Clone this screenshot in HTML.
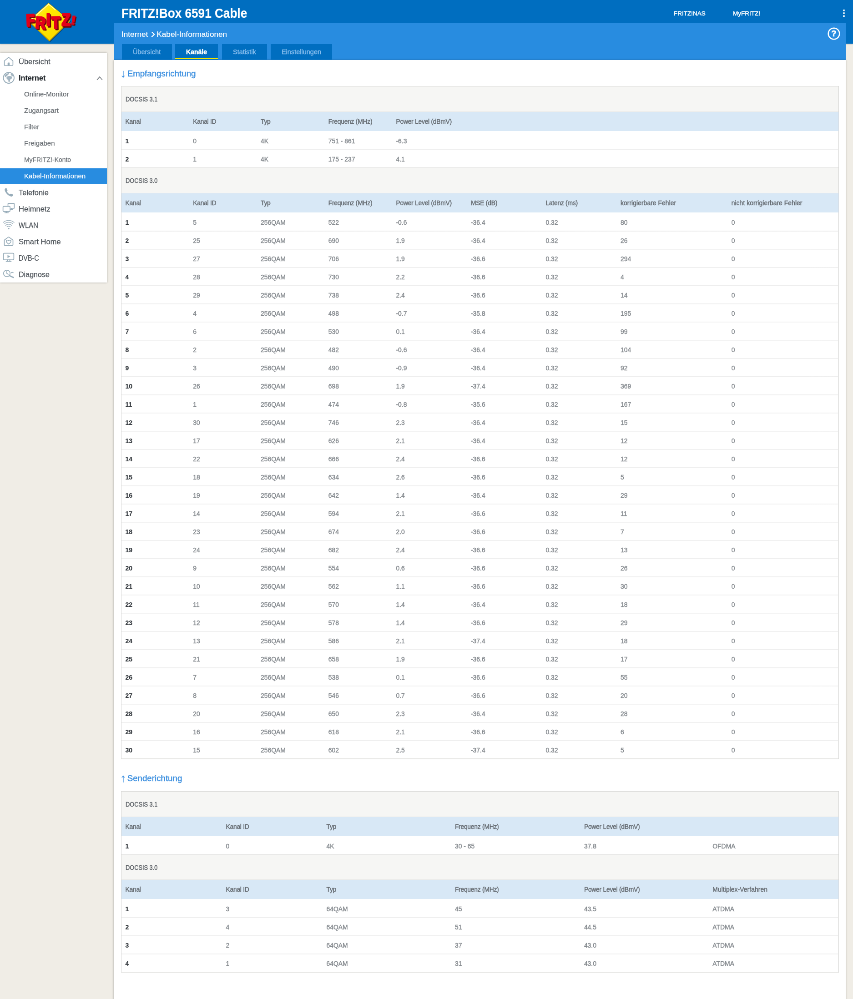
<!DOCTYPE html>
<html lang="de">
<head>
<meta charset="utf-8">
<title>FRITZ!Box 6591 Cable</title>
<style>
html,body{margin:0;padding:0}
html{width:853px;height:999px;overflow:hidden}
body{width:853px;height:999px;overflow:hidden;background:#f0ede6;font-family:"Liberation Sans",sans-serif;color:#3f464c}
#pg{will-change:transform;position:absolute;left:0;top:0;width:1875px;height:2196px;transform:scale(0.454933);transform-origin:0 0;background:#f0ede6;overflow:hidden}
#pg div,#pg span{box-sizing:border-box}
#pg{-webkit-text-stroke:0.45px currentColor}
.abs{position:absolute}
#top{left:0;top:0;width:1875px;height:96px;background:#006ec0;box-shadow:0 1px 3px rgba(0,0,0,.25)}
#sub{left:250px;top:50px;width:1609px;height:82px;background:#288ce0}
#main{left:250px;top:132px;width:1609px;height:2080px;background:#fff;box-shadow:0 0 4px rgba(0,0,0,.3)}
#title{left:267px;top:10.5px;font-size:29px;transform:scaleX(.902);-webkit-text-stroke:0.2px #fff;transform-origin:0 0;font-weight:bold;color:#fff;white-space:nowrap;line-height:36px}
.tl{top:20px;font-size:13.5px;color:#fff;white-space:nowrap;line-height:20px}
#crumb{left:267px;top:64px;font-size:17.2px;-webkit-text-stroke:0.15px #fff;color:#fff;white-space:nowrap;line-height:22px}
.gt{display:inline-block;font-size:27px;line-height:0;vertical-align:baseline;-webkit-text-stroke:0;transform:translateY(1.5px) scaleX(1.15);margin:0 -1px 0 1.5px}
.tab{top:97px;height:34px;background:#006ec0;color:#86bdee;font-size:14.5px;line-height:34px;text-align:center;white-space:nowrap}
.tab.on{color:#fff;font-weight:bold;font-size:14px}
.tab.on:after{content:"";position:absolute;left:0;right:0;bottom:1.5px;height:3px;background:#f2e500}
#nav{-webkit-text-stroke:0.25px currentColor;left:0;top:116px;width:235px;height:505px;background:#fff;box-shadow:0 0 4px rgba(0,0,0,.3);padding-top:2px}
.mi{position:relative;height:36px;line-height:34.5px;font-size:16.5px;color:#4b5157;padding-left:41px;white-space:nowrap}
.sx{display:inline-block;transform-origin:0 50%}
.mi.sub{font-size:15px;padding-left:53px;color:#676c71}
.mi.sel{background:#288ce0;color:#fff;box-shadow:inset 0 -1.5px 0 #fff}
.mi.open{color:#23282d;font-weight:bold;font-size:16.2px}
.mi svg{position:absolute;left:6.5px;top:5px;width:24px;height:24px;overflow:visible}
.mi svg.chev{left:210px;top:9px;width:18px;height:18px}
.hd{position:absolute;left:266px;padding-left:14px;font-size:19.2px;line-height:26px;color:#3c8fdf;white-space:nowrap;transform:scaleX(.975);transform-origin:0 0}
.ar{position:absolute;left:-1.6px;top:-1px;font-size:25px;line-height:26px}
.box{position:absolute;left:266px;width:1578px;border:1px solid #d6d6d4;border-bottom:2px solid #e4e4e2;background:#fff}
.cap span{display:inline-block;transform:scaleX(.875);transform-origin:0 50%}
.cap{height:57px;line-height:57px;padding-left:8.5px;font-size:14.6px;color:#5d6267;background:#f6f6f4;border-top:1px solid #e4e4e2;border-bottom:1px solid #e9e9e7}
.cap.first{height:56px;line-height:57px;border-top:0}
.tx .cap{height:56px}
.r{display:flex;width:1676.60px;transform:scaleX(0.94);transform-origin:0 0;height:40px;line-height:44px;font-size:14.8px;color:#84898e;white-space:nowrap}
.r span{display:block;padding-left:9.04px;flex:none}
.r.h{height:42px;line-height:42px;background:#d8e8f6;color:#656b71;border-bottom:0}
.r.h span{letter-spacing:-0.3px}
.rx .r.h .c8,.rx .r.h .c9,.tx .r.h .c6{letter-spacing:.05px}
.r.d .c1{font-weight:bold;color:#33383d;-webkit-text-stroke:0.2px currentColor}
.r.d + .r.d{background:linear-gradient(#eeeeee,#eeeeee) 0 0/100% 1.7px no-repeat}
.rx span{width:158.24px}
.rx .c5,.rx .c6,.rx .c7{width:175.00px}
.rx .c8,.rx .c9{width:259.31px}
.tx span{width:300.43px}
.tx .c4{width:302.13px}
.tx .c1,.tx .c2{width:235.11px}
</style>
</head>
<body>
<div id="pg">
<div id="top" class="abs"></div>
<div id="sub" class="abs"></div>
<div id="main" class="abs"></div>
<div id="title" class="abs">FRITZ!Box 6591 Cable</div>
<div class="abs tl" style="left:1481px">FRITZ!NAS</div>
<div class="abs tl" style="left:1611px">MyFRITZ!</div>
<svg class="abs" style="left:1850px;top:20px" width="10" height="20" viewBox="0 0 10 20"><rect x="3.3" y="1" width="3.4" height="3.4" fill="#fff"/><rect x="3.3" y="7.3" width="3.4" height="3.4" fill="#fff"/><rect x="3.3" y="13.6" width="3.4" height="3.4" fill="#fff"/></svg>
<div id="crumb" class="abs">Internet <span class="gt">&#8250;</span> Kabel-Informationen</div>
<svg class="abs" style="left:1818px;top:59px" width="30" height="30" viewBox="0 0 30 30"><circle cx="15" cy="15" r="12.3" fill="none" stroke="#fff" stroke-width="2.6"/><text x="15" y="21.5" text-anchor="middle" font-family="Liberation Sans, sans-serif" font-weight="bold" font-size="18.5" fill="#fff" stroke="#fff" stroke-width=".7">?</text></svg>
<div class="abs tab" style="left:267.5px;width:110px">Übersicht</div>
<div class="abs tab on" style="left:385px;width:94px">Kanäle</div>
<div class="abs tab" style="left:488px;width:99px">Statistik</div>
<div class="abs tab" style="left:595px;width:135px">Einstellungen</div>
<svg class="abs" style="left:40px;top:0" width="150" height="96" viewBox="40 0 150 96">
<defs><linearGradient id="yg" x1="0" y1="0" x2="1" y2="1"><stop offset="0" stop-color="#fff36a"/><stop offset=".35" stop-color="#ffe800"/><stop offset="1" stop-color="#f5d400"/></linearGradient></defs>
<polygon points="108.300,8.200 156.300,47.200 110.100,93 63.500,47.700" fill="#06305f" opacity=".6"/>
<polygon points="106.800,6.200 154.300,45.700 108.600,90.800 61.500,46.200" fill="url(#yg)" stroke="#33414f" stroke-width=".8"/>
<polyline points="153,46.500 108.600,89.600 63.500,46.800" fill="none" stroke="#c9a700" stroke-width="2"/>
<polyline points="66,45.600 106.900,9.400 122,22" fill="none" stroke="#fffbd0" stroke-width="1.800" opacity=".9"/>
<g transform="scale(.85 1)" font-family="Liberation Sans, sans-serif" font-weight="bold" font-size="36.5" stroke-linejoin="round">
<text x="71.0 93.7 122.6 136.2 162.4" y="59.9 64.1 58.9 64.9 58.9" rotate="-3 4 0 -1 0" fill="#6e0808" stroke="#6e0808" stroke-width="3.4">FRITZ<tspan x="184.3" y="55.4" font-size="27" rotate="7" stroke-width="1.500" textLength="13.5" lengthAdjust="spacingAndGlyphs">!</tspan></text>
<text x="68.2 90.9 119.8 133.4 159.6" y="57.5 61.7 56.5 62.5 56.5" rotate="-3 4 0 -1 0" fill="#e2001a" stroke="#e2001a" stroke-width="3.4">FRITZ<tspan x="181.5" y="53" font-size="27" rotate="7" stroke-width="1.500" textLength="13.5" lengthAdjust="spacingAndGlyphs">!</tspan></text>
</g>
</svg>
<div id="nav" class="abs">
<div class="mi"><svg viewBox="0 0 24 24"><path d="M2.6 10.8 L12 2.800 L21.400 10.8 V19.8 Q21.400 21 20.200 21 H3.800 Q2.600 21 2.600 19.8 Z" fill="none" stroke="#97acb9" stroke-width="1.7" stroke-linejoin="round" stroke-linecap="round"/><path d="M10.200 21 V15 H13.800 V21 Z" fill="#97acb9" stroke="#97acb9" stroke-width="1"/></svg>Übersicht</div>
<div class="mi open"><svg viewBox="0 0 24 24"><circle cx="12.200" cy="12.100" r="11.800" fill="none" stroke="#97acb9" stroke-width="2"/><path d="M4.500 5.500 C6.500 3.200 9.500 1.800 12.500 1.900 C14 2.600 12.500 4.200 11 4.800 C9.500 5.500 10 7 8.500 7.800 C7 8.500 6.500 10.500 5 10.500 C3.500 10.500 2.800 8 4.500 5.500 Z M8.500 9.800 C10.500 8 14 7.500 17 8.500 C19.500 9.300 20.500 11.500 19 13.200 C17.500 14.800 15.500 15 15.200 17 C15 19 14.500 21.500 13 22 C11.500 22.500 11.500 20 11.500 18.500 C11.500 16.500 9.500 16 8.200 14.500 C6.800 13 6.800 11 8.500 9.800 Z M16.500 2.800 C19 3.800 21.500 6 22.600 9 C21 9 19.500 8.500 18.300 7.300 C17 6 16 4 16.500 2.800 Z" fill="#a3b5c1"/></svg>Internet<svg class="chev" viewBox="0 0 24 24"><path d="M4 17 L12 8 L20 17" fill="none" stroke="#6a7076" stroke-width="2"/></svg></div>
<div class="mi sub">Online-Monitor</div>
<div class="mi sub">Zugangsart</div>
<div class="mi sub">Filter</div>
<div class="mi sub">Freigaben</div>
<div class="mi sub"><span class="sx" style="transform:scaleX(.93)">MyFRITZ!-Konto</span></div>
<div class="mi sub sel">Kabel-Informationen</div>
<div class="mi"><svg viewBox="0 0 24 24"><path d="M5.2 2.800 C6.200 2.200 7.200 2.400 7.800 3.500 L9.300 6.500 C9.700 7.400 9.500 8.200 8.800 8.800 L7.800 9.600 C9.300 12.600 11.600 14.900 14.600 16.400 L15.500 15.400 C16.100 14.700 16.900 14.500 17.800 14.900 L20.700 16.300 C21.700 16.900 22 17.900 21.400 18.900 C20.400 20.600 18.600 21.300 16.600 20.700 C10.600 18.900 5.300 13.600 3.500 7.600 C2.900 5.600 3.500 3.800 5.200 2.800 Z" fill="#97acb9"/></svg>Telefonie</div>
<div class="mi"><svg viewBox="0 0 24 24"><path d="M10.500 5 V1.200 Q10.500 0.200 11.500 0.200 H23.400 Q24.400 0.200 24.400 1.200 V10 Q24.400 11 23.400 11 H17" fill="none" stroke="#97acb9" stroke-width="1.7" stroke-linejoin="round" stroke-linecap="round"/><rect x="-0.400" y="6.600" width="15.500" height="11.200" rx="1.200" fill="none" stroke="#97acb9" stroke-width="1.7" stroke-linejoin="round" stroke-linecap="round"/><path d="M3.500 20.600 H11.200 M7.350 18 V20.500" fill="none" stroke="#97acb9" stroke-width="1.7" stroke-linejoin="round" stroke-linecap="round"/><path d="M18.500 11.200 V13 M16.800 13.400 H21" fill="none" stroke="#97acb9" stroke-width="1.7" stroke-linejoin="round" stroke-linecap="round"/></svg>Heimnetz</div>
<div class="mi"><svg viewBox="0 0 24 24"><circle cx="12" cy="19.600" r="1.700" fill="#97acb9"/><path d="M8.300 15.600 A5.400 5.400 0 0 1 15.700 15.600 M5.400 12.400 A9.600 9.600 0 0 1 18.600 12.400 M2.600 9.200 A13.800 13.800 0 0 1 21.400 9.200 M0 6 A18 18 0 0 1 24 6" fill="none" stroke="#9db0bc" stroke-width="1.500" stroke-linecap="round"/></svg><span class="sx" style="transform:scaleX(.9)">WLAN</span></div>
<div class="mi"><svg viewBox="0 0 24 24"><path d="M2.500 8.800 L10.800 2.600 Q12 1.800 13.200 2.600 L21.500 8.800 V19.300 Q21.500 20.800 20 20.800 H4 Q2.500 20.800 2.500 19.300 Z" fill="none" stroke="#97acb9" stroke-width="1.7" stroke-linejoin="round" stroke-linecap="round"/><path d="M12 17.600 C8.500 15 6.800 13.200 6.800 11 C6.800 8.600 10 7.800 12 10.300 C14 7.800 17.200 8.600 17.200 11 C17.200 13.200 15.500 15 12 17.600 Z" fill="none" stroke="#97acb9" stroke-width="1.7" stroke-linejoin="round" stroke-linecap="round"/></svg>Smart Home</div>
<div class="mi"><svg viewBox="0 0 24 24"><rect x="0.600" y="1.600" width="22.800" height="14.400" rx="2" fill="none" stroke="#97acb9" stroke-width="1.7" stroke-linejoin="round" stroke-linecap="round"/><path d="M9.500 5.400 L15.500 8.800 L9.500 12.200 Z" fill="#97acb9"/><path d="M6.500 19.600 H17.500 M9.500 16.200 V19.400 M14.500 16.200 V19.400" fill="none" stroke="#97acb9" stroke-width="1.7" stroke-linejoin="round" stroke-linecap="round"/></svg><span class="sx" style="transform:scaleX(.87)">DVB-C</span></div>
<div class="mi"><svg viewBox="0 0 24 24"><circle cx="8" cy="10" r="7.200" fill="none" stroke="#97acb9" stroke-width="1.7" stroke-linejoin="round" stroke-linecap="round"/><path d="M8 5.500 V10 L11 12" fill="none" stroke="#97acb9" stroke-width="1.7" stroke-linejoin="round" stroke-linecap="round"/><path d="M13.500 14.800 L22.500 19" fill="none" stroke="#97acb9" stroke-width="2.600" stroke-linecap="round"/><path d="M18 8.500 A3 3 0 0 1 22 8.500" fill="none" stroke="#97acb9" stroke-width="1.7" stroke-linejoin="round" stroke-linecap="round"/></svg><span class="sx" style="transform:scaleX(.975)">Diagnose</span></div>
</div>
<div class="hd" style="top:149px"><span class="ar">&#8595;</span>Empfangsrichtung</div>

<div class="box rx" style="top:189px">
<div class="cap first"><span>DOCSIS 3.1</span></div>
<div class="r h"><span class="c1">Kanal</span><span class="c2">Kanal ID</span><span class="c3">Typ</span><span class="c4">Frequenz (MHz)</span><span class="c5">Power Level (dBmV)</span><span class="c6"></span><span class="c7"></span><span class="c8"></span><span class="c9"></span></div>
<div class="r d"><span class="c1">1</span><span class="c2">0</span><span class="c3">4K</span><span class="c4">751 - 861</span><span class="c5">-6.3</span><span class="c6"></span><span class="c7"></span><span class="c8"></span><span class="c9"></span></div>
<div class="r d"><span class="c1">2</span><span class="c2">1</span><span class="c3">4K</span><span class="c4">175 - 237</span><span class="c5">4.1</span><span class="c6"></span><span class="c7"></span><span class="c8"></span><span class="c9"></span></div>
<div class="cap"><span>DOCSIS 3.0</span></div>
<div class="r h"><span class="c1">Kanal</span><span class="c2">Kanal ID</span><span class="c3">Typ</span><span class="c4">Frequenz (MHz)</span><span class="c5">Power Level (dBmV)</span><span class="c6">MSE (dB)</span><span class="c7">Latenz (ms)</span><span class="c8">korrigierbare Fehler</span><span class="c9">nicht korrigierbare Fehler</span></div>
<div class="r d"><span class="c1">1</span><span class="c2">5</span><span class="c3">256QAM</span><span class="c4">522</span><span class="c5">-0.6</span><span class="c6">-36.4</span><span class="c7">0.32</span><span class="c8">80</span><span class="c9">0</span></div>
<div class="r d"><span class="c1">2</span><span class="c2">25</span><span class="c3">256QAM</span><span class="c4">690</span><span class="c5">1.9</span><span class="c6">-36.4</span><span class="c7">0.32</span><span class="c8">26</span><span class="c9">0</span></div>
<div class="r d"><span class="c1">3</span><span class="c2">27</span><span class="c3">256QAM</span><span class="c4">706</span><span class="c5">1.9</span><span class="c6">-36.6</span><span class="c7">0.32</span><span class="c8">294</span><span class="c9">0</span></div>
<div class="r d"><span class="c1">4</span><span class="c2">28</span><span class="c3">256QAM</span><span class="c4">730</span><span class="c5">2.2</span><span class="c6">-36.6</span><span class="c7">0.32</span><span class="c8">4</span><span class="c9">0</span></div>
<div class="r d"><span class="c1">5</span><span class="c2">29</span><span class="c3">256QAM</span><span class="c4">738</span><span class="c5">2.4</span><span class="c6">-36.6</span><span class="c7">0.32</span><span class="c8">14</span><span class="c9">0</span></div>
<div class="r d"><span class="c1">6</span><span class="c2">4</span><span class="c3">256QAM</span><span class="c4">498</span><span class="c5">-0.7</span><span class="c6">-35.8</span><span class="c7">0.32</span><span class="c8">195</span><span class="c9">0</span></div>
<div class="r d"><span class="c1">7</span><span class="c2">6</span><span class="c3">256QAM</span><span class="c4">530</span><span class="c5">0.1</span><span class="c6">-36.4</span><span class="c7">0.32</span><span class="c8">99</span><span class="c9">0</span></div>
<div class="r d"><span class="c1">8</span><span class="c2">2</span><span class="c3">256QAM</span><span class="c4">482</span><span class="c5">-0.6</span><span class="c6">-36.4</span><span class="c7">0.32</span><span class="c8">104</span><span class="c9">0</span></div>
<div class="r d"><span class="c1">9</span><span class="c2">3</span><span class="c3">256QAM</span><span class="c4">490</span><span class="c5">-0.9</span><span class="c6">-36.4</span><span class="c7">0.32</span><span class="c8">92</span><span class="c9">0</span></div>
<div class="r d"><span class="c1">10</span><span class="c2">26</span><span class="c3">256QAM</span><span class="c4">698</span><span class="c5">1.9</span><span class="c6">-37.4</span><span class="c7">0.32</span><span class="c8">369</span><span class="c9">0</span></div>
<div class="r d"><span class="c1">11</span><span class="c2">1</span><span class="c3">256QAM</span><span class="c4">474</span><span class="c5">-0.8</span><span class="c6">-35.6</span><span class="c7">0.32</span><span class="c8">167</span><span class="c9">0</span></div>
<div class="r d"><span class="c1">12</span><span class="c2">30</span><span class="c3">256QAM</span><span class="c4">746</span><span class="c5">2.3</span><span class="c6">-36.4</span><span class="c7">0.32</span><span class="c8">15</span><span class="c9">0</span></div>
<div class="r d"><span class="c1">13</span><span class="c2">17</span><span class="c3">256QAM</span><span class="c4">626</span><span class="c5">2.1</span><span class="c6">-36.4</span><span class="c7">0.32</span><span class="c8">12</span><span class="c9">0</span></div>
<div class="r d"><span class="c1">14</span><span class="c2">22</span><span class="c3">256QAM</span><span class="c4">666</span><span class="c5">2.4</span><span class="c6">-36.6</span><span class="c7">0.32</span><span class="c8">12</span><span class="c9">0</span></div>
<div class="r d"><span class="c1">15</span><span class="c2">18</span><span class="c3">256QAM</span><span class="c4">634</span><span class="c5">2.6</span><span class="c6">-36.6</span><span class="c7">0.32</span><span class="c8">5</span><span class="c9">0</span></div>
<div class="r d"><span class="c1">16</span><span class="c2">19</span><span class="c3">256QAM</span><span class="c4">642</span><span class="c5">1.4</span><span class="c6">-36.4</span><span class="c7">0.32</span><span class="c8">29</span><span class="c9">0</span></div>
<div class="r d"><span class="c1">17</span><span class="c2">14</span><span class="c3">256QAM</span><span class="c4">594</span><span class="c5">2.1</span><span class="c6">-36.6</span><span class="c7">0.32</span><span class="c8">11</span><span class="c9">0</span></div>
<div class="r d"><span class="c1">18</span><span class="c2">23</span><span class="c3">256QAM</span><span class="c4">674</span><span class="c5">2.0</span><span class="c6">-36.6</span><span class="c7">0.32</span><span class="c8">7</span><span class="c9">0</span></div>
<div class="r d"><span class="c1">19</span><span class="c2">24</span><span class="c3">256QAM</span><span class="c4">682</span><span class="c5">2.4</span><span class="c6">-36.6</span><span class="c7">0.32</span><span class="c8">13</span><span class="c9">0</span></div>
<div class="r d"><span class="c1">20</span><span class="c2">9</span><span class="c3">256QAM</span><span class="c4">554</span><span class="c5">0.6</span><span class="c6">-36.6</span><span class="c7">0.32</span><span class="c8">26</span><span class="c9">0</span></div>
<div class="r d"><span class="c1">21</span><span class="c2">10</span><span class="c3">256QAM</span><span class="c4">562</span><span class="c5">1.1</span><span class="c6">-36.6</span><span class="c7">0.32</span><span class="c8">30</span><span class="c9">0</span></div>
<div class="r d"><span class="c1">22</span><span class="c2">11</span><span class="c3">256QAM</span><span class="c4">570</span><span class="c5">1.4</span><span class="c6">-36.4</span><span class="c7">0.32</span><span class="c8">18</span><span class="c9">0</span></div>
<div class="r d"><span class="c1">23</span><span class="c2">12</span><span class="c3">256QAM</span><span class="c4">578</span><span class="c5">1.4</span><span class="c6">-36.6</span><span class="c7">0.32</span><span class="c8">29</span><span class="c9">0</span></div>
<div class="r d"><span class="c1">24</span><span class="c2">13</span><span class="c3">256QAM</span><span class="c4">586</span><span class="c5">2.1</span><span class="c6">-37.4</span><span class="c7">0.32</span><span class="c8">18</span><span class="c9">0</span></div>
<div class="r d"><span class="c1">25</span><span class="c2">21</span><span class="c3">256QAM</span><span class="c4">658</span><span class="c5">1.9</span><span class="c6">-36.6</span><span class="c7">0.32</span><span class="c8">17</span><span class="c9">0</span></div>
<div class="r d"><span class="c1">26</span><span class="c2">7</span><span class="c3">256QAM</span><span class="c4">538</span><span class="c5">0.1</span><span class="c6">-36.6</span><span class="c7">0.32</span><span class="c8">55</span><span class="c9">0</span></div>
<div class="r d"><span class="c1">27</span><span class="c2">8</span><span class="c3">256QAM</span><span class="c4">546</span><span class="c5">0.7</span><span class="c6">-36.6</span><span class="c7">0.32</span><span class="c8">20</span><span class="c9">0</span></div>
<div class="r d"><span class="c1">28</span><span class="c2">20</span><span class="c3">256QAM</span><span class="c4">650</span><span class="c5">2.3</span><span class="c6">-36.4</span><span class="c7">0.32</span><span class="c8">28</span><span class="c9">0</span></div>
<div class="r d"><span class="c1">29</span><span class="c2">16</span><span class="c3">256QAM</span><span class="c4">618</span><span class="c5">2.1</span><span class="c6">-36.6</span><span class="c7">0.32</span><span class="c8">6</span><span class="c9">0</span></div>
<div class="r d"><span class="c1">30</span><span class="c2">15</span><span class="c3">256QAM</span><span class="c4">602</span><span class="c5">2.5</span><span class="c6">-37.4</span><span class="c7">0.32</span><span class="c8">5</span><span class="c9">0</span></div>
</div>
<div class="hd" style="top:1698px"><span class="ar">&#8593;</span>Senderichtung</div>
<div class="box tx" style="top:1739px">
<div class="cap first"><span>DOCSIS 3.1</span></div>
<div class="r h"><span class="c1">Kanal</span><span class="c2">Kanal ID</span><span class="c3">Typ</span><span class="c4">Frequenz (MHz)</span><span class="c5">Power Level (dBmV)</span><span class="c6"></span></div>
<div class="r d"><span class="c1">1</span><span class="c2">0</span><span class="c3">4K</span><span class="c4">30 - 65</span><span class="c5">37.8</span><span class="c6">OFDMA</span></div>
<div class="cap"><span>DOCSIS 3.0</span></div>
<div class="r h"><span class="c1">Kanal</span><span class="c2">Kanal ID</span><span class="c3">Typ</span><span class="c4">Frequenz (MHz)</span><span class="c5">Power Level (dBmV)</span><span class="c6">Multiplex-Verfahren</span></div>
<div class="r d"><span class="c1">1</span><span class="c2">3</span><span class="c3">64QAM</span><span class="c4">45</span><span class="c5">43.5</span><span class="c6">ATDMA</span></div>
<div class="r d"><span class="c1">2</span><span class="c2">4</span><span class="c3">64QAM</span><span class="c4">51</span><span class="c5">44.5</span><span class="c6">ATDMA</span></div>
<div class="r d"><span class="c1">3</span><span class="c2">2</span><span class="c3">64QAM</span><span class="c4">37</span><span class="c5">43.0</span><span class="c6">ATDMA</span></div>
<div class="r d"><span class="c1">4</span><span class="c2">1</span><span class="c3">64QAM</span><span class="c4">31</span><span class="c5">43.0</span><span class="c6">ATDMA</span></div>
</div>
</div>
</body>
</html>
